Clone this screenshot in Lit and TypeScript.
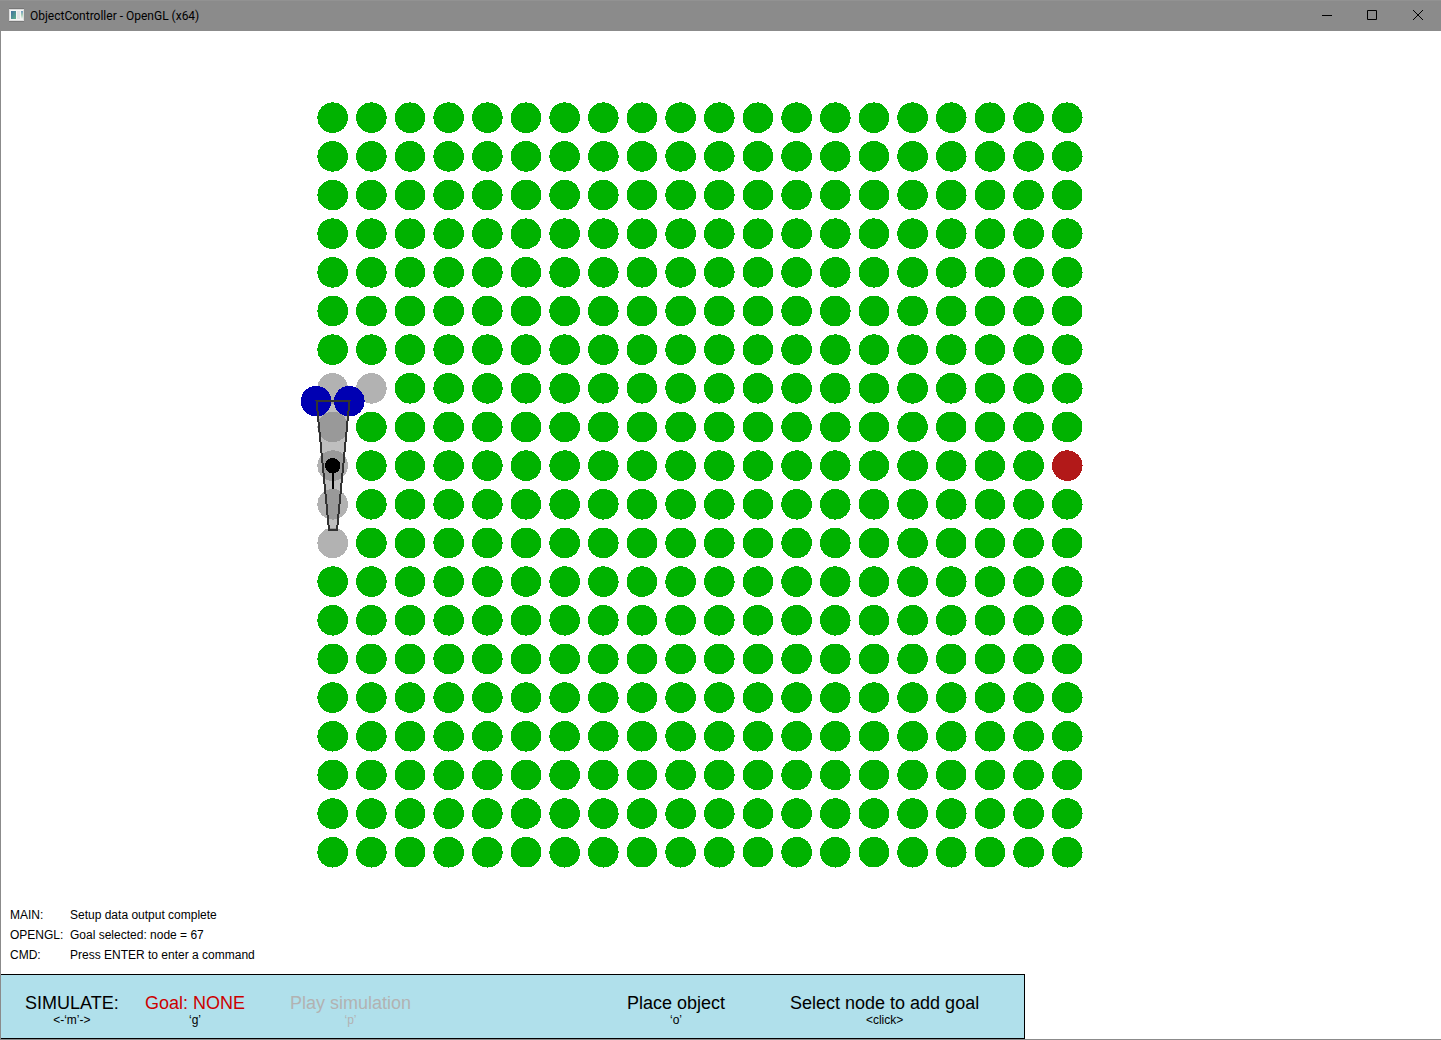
import { LitElement, html, svg, css } from "lit";
import { customElement, property } from "lit/decorators.js";
import { classMap } from "lit/directives/class-map.js";

@customElement("title-bar")
class TitleBar extends LitElement {
  @property() caption = "";

  static styles = css`
    :host {
      display: block;
    }
    .bar {
      display: flex;
      align-items: center;
      height: 30px;
      border-top: 1px solid #929292;
      background: #8b8b8b;
      color: #000;
    }
    .app-icon {
      flex: none;
      width: 16px;
      height: 16px;
      margin-left: 9px;
    }
    .caption {
      flex: 1;
      margin: 0 0 0 5px;
      font: 400 12px/16px Roboto, "Open Sans", sans-serif;
      white-space: nowrap;
    }
    .controls {
      display: flex;
      align-self: flex-start;
    }
    .control {
      display: flex;
      align-items: center;
      justify-content: center;
      width: 46px;
      height: 28px;
      margin: 0;
      padding: 0;
      border: 0;
      background: none;
      color: inherit;
    }
    .glyph {
      width: 10px;
      height: 10px;
      fill: none;
      stroke: currentColor;
      overflow: visible;
    }
  `;

  render() {
    return html`
      <header class="bar">
        <svg class="app-icon" viewBox="0 0 16 16" aria-hidden="true">
          <defs>
            <linearGradient id="pane" x1="0" y1="0" x2="1" y2="1">
              <stop offset="0" stop-color="#3f6fa0" />
              <stop offset="1" stop-color="#5fb08a" />
            </linearGradient>
            <linearGradient id="side" x1="0" y1="0" x2="0" y2="1">
              <stop offset="0" stop-color="#6f9cc4" />
              <stop offset="0.5" stop-color="#a8d0b8" />
              <stop offset="1" stop-color="#f4f4f4" />
            </linearGradient>
          </defs>
          <rect x="0" y="0" width="15" height="1" fill="#777" />
          <rect x="0.5" y="1.5" width="14" height="11" fill="#f4f4f4" stroke="#dcdcdc" />
          <rect x="0" y="13" width="15" height="1" fill="#777" />
          <rect x="2" y="3" width="5" height="8" fill="url(#pane)" />
          <rect x="8" y="3" width="3" height="8" fill="#e2e4e6" />
          <rect x="12" y="3" width="2" height="8" fill="url(#side)" />
        </svg>
        <h1 class="caption">${this.caption}</h1>
        <div class="controls">
          <button class="control" type="button" aria-label="Minimize">
            <svg class="glyph" viewBox="0 0 10 10"><path d="M1 5.5H11" /></svg>
          </button>
          <button class="control" type="button" aria-label="Maximize">
            <svg class="glyph" viewBox="0 0 10 10"><path d="M0.5 0.5H9.5V9.5H0.5Z" /></svg>
          </button>
          <button class="control" type="button" aria-label="Close">
            <svg class="glyph" viewBox="0 0 10 10"><path d="M0 0L10 10M10 0L0 10" /></svg>
          </button>
        </div>
      </header>
    `;
  }
}

const GRID_SIZE = 20;
const ORIGIN = { x: 331.7, y: 86.7 };
const PITCH = 38.66;
const NODE_RADIUS = 15.3;

const GOAL_NODE = "19,9";
const BLOCKED_NODES = new Set(["0,7", "1,7", "0,8", "0,9", "0,10", "0,11"]);

@customElement("node-field")
class NodeField extends LitElement {
  static styles = css`
    :host {
      display: block;
      min-height: 0;
    }
    .scene {
      display: block;
      width: 100%;
      height: 100%;
      shape-rendering: crispEdges;
    }
    .node {
      fill: #00b200;
    }
    .blocked {
      fill: #b2b2b2;
    }
    .goal {
      fill: #b21919;
    }
    .body {
      fill: #7f7f7f;
      fill-opacity: 0.5;
    }
    .outline {
      fill: none;
      stroke: #333;
      stroke-width: 2;
    }
    .wheel {
      fill: #0000b2;
    }
    .heading {
      stroke: #000;
      stroke-width: 2;
    }
  `;

  private node(col: number, row: number) {
    const key = `${col},${row}`;
    const classes = {
      node: true,
      blocked: BLOCKED_NODES.has(key),
      goal: key === GOAL_NODE,
    };
    return svg`<circle class=${classMap(classes)} cx=${ORIGIN.x + col * PITCH} cy=${ORIGIN.y + row * PITCH} r=${NODE_RADIUS} />`;
  }

  render() {
    const steps = Array.from({ length: GRID_SIZE }, (_, i) => i);
    const shape = "315.5,370 348.5,370 336,499 328,499";
    return html`
      <svg class="scene" viewBox="0 0 1440 874" role="img" aria-label="Node grid">
        ${steps.map((row) => steps.map((col) => this.node(col, row)))}
        <polygon class="body" points=${shape} />
        <circle class="wheel" cx="315.1" cy="370.2" r="15.3" />
        <circle class="wheel" cx="348.3" cy="370.2" r="15.3" />
        <polygon class="outline" points=${shape} />
        <circle cx="331.7" cy="434.7" r="7.7" />
        <path class="heading" d="M332 434V458" />
      </svg>
    `;
  }
}

interface Message {
  source: string;
  text: string;
}

@customElement("message-log")
class MessageLog extends LitElement {
  @property({ attribute: false }) messages: Message[] = [];

  static styles = css`
    .log {
      display: grid;
      grid-template-columns: 60px 1fr;
      margin: 0;
      padding: 0 9px 9px;
      font: 12px/20px "Liberation Sans", Arial, sans-serif;
      color: #000;
      white-space: nowrap;
    }
    .text {
      margin: 0;
    }
  `;

  render() {
    return html`
      <dl class="log">
        ${this.messages.map((m) => html`<dt>${m.source}:</dt><dd class="text">${m.text}</dd>`)}
      </dl>
    `;
  }
}

interface Command {
  label: string;
  hint: string;
  kind: string;
  disabled?: boolean;
}

const COMMANDS: Command[] = [
  { label: "SIMULATE:", hint: "<-‘m’->", kind: "mode" },
  { label: "Goal: NONE", hint: "‘g’", kind: "goal" },
  { label: "Play simulation", hint: "‘p’", kind: "play", disabled: true },
  { label: "Place object", hint: "‘o’", kind: "place" },
  { label: "Select node to add goal", hint: "<click>", kind: "select" },
];

@customElement("command-bar")
class CommandBar extends LitElement {
  static styles = css`
    .bar {
      display: grid;
      grid-template-columns: 120px 145px 337px 163px 1fr;
      align-items: center;
      justify-items: start;
      box-sizing: border-box;
      max-width: 1024px;
      height: 65px;
      padding: 6px 24px 0;
      border: 1px solid #000;
      border-left: 0;
      background: #b0e0eb;
    }
    .command {
      display: flex;
      flex-direction: column;
      align-items: center;
      margin: 0;
      padding: 0;
      border: 0;
      background: none;
      color: #000;
      font: 18px/20px "Liberation Sans", Arial, sans-serif;
      white-space: nowrap;
    }
    .goal {
      color: #cc0000;
    }
    .play {
      color: #b2b2b2;
    }
    .hint {
      font-size: 12px;
      line-height: 14px;
      color: #000;
    }
    .play .hint {
      color: #b2b2b2;
    }
  `;

  render() {
    return html`
      <nav class="bar" aria-label="Commands">
        ${COMMANDS.map(
          (c) => html`
            <button class="command ${c.kind}" type="button" ?disabled=${c.disabled}>
              <span>${c.label}</span>
              <span class="hint">${c.hint}</span>
            </button>
          `,
        )}
      </nav>
    `;
  }
}

@customElement("app-root")
class AppRoot extends LitElement {
  static styles = css`
    :host {
      display: block;
    }
    .window {
      display: flex;
      flex-direction: column;
      box-sizing: border-box;
      height: 100vh;
      background: #fff;
    }
    .client {
      display: flex;
      flex: 1;
      flex-direction: column;
      min-height: 0;
      border-left: 1px solid #8b8b8b;
      border-bottom: 1px solid #8b8b8b;
    }
    .field {
      flex: 1;
    }
  `;

  private messages: Message[] = [
    { source: "MAIN", text: "Setup data output complete" },
    { source: "OPENGL", text: "Goal selected: node = 67" },
    { source: "CMD", text: "Press ENTER to enter a command" },
  ];

  render() {
    return html`
      <div class="window">
        <title-bar caption="ObjectController - OpenGL (x64)"></title-bar>
        <main class="client">
          <node-field class="field"></node-field>
          <message-log .messages=${this.messages}></message-log>
          <command-bar></command-bar>
        </main>
      </div>
    `;
  }
}
